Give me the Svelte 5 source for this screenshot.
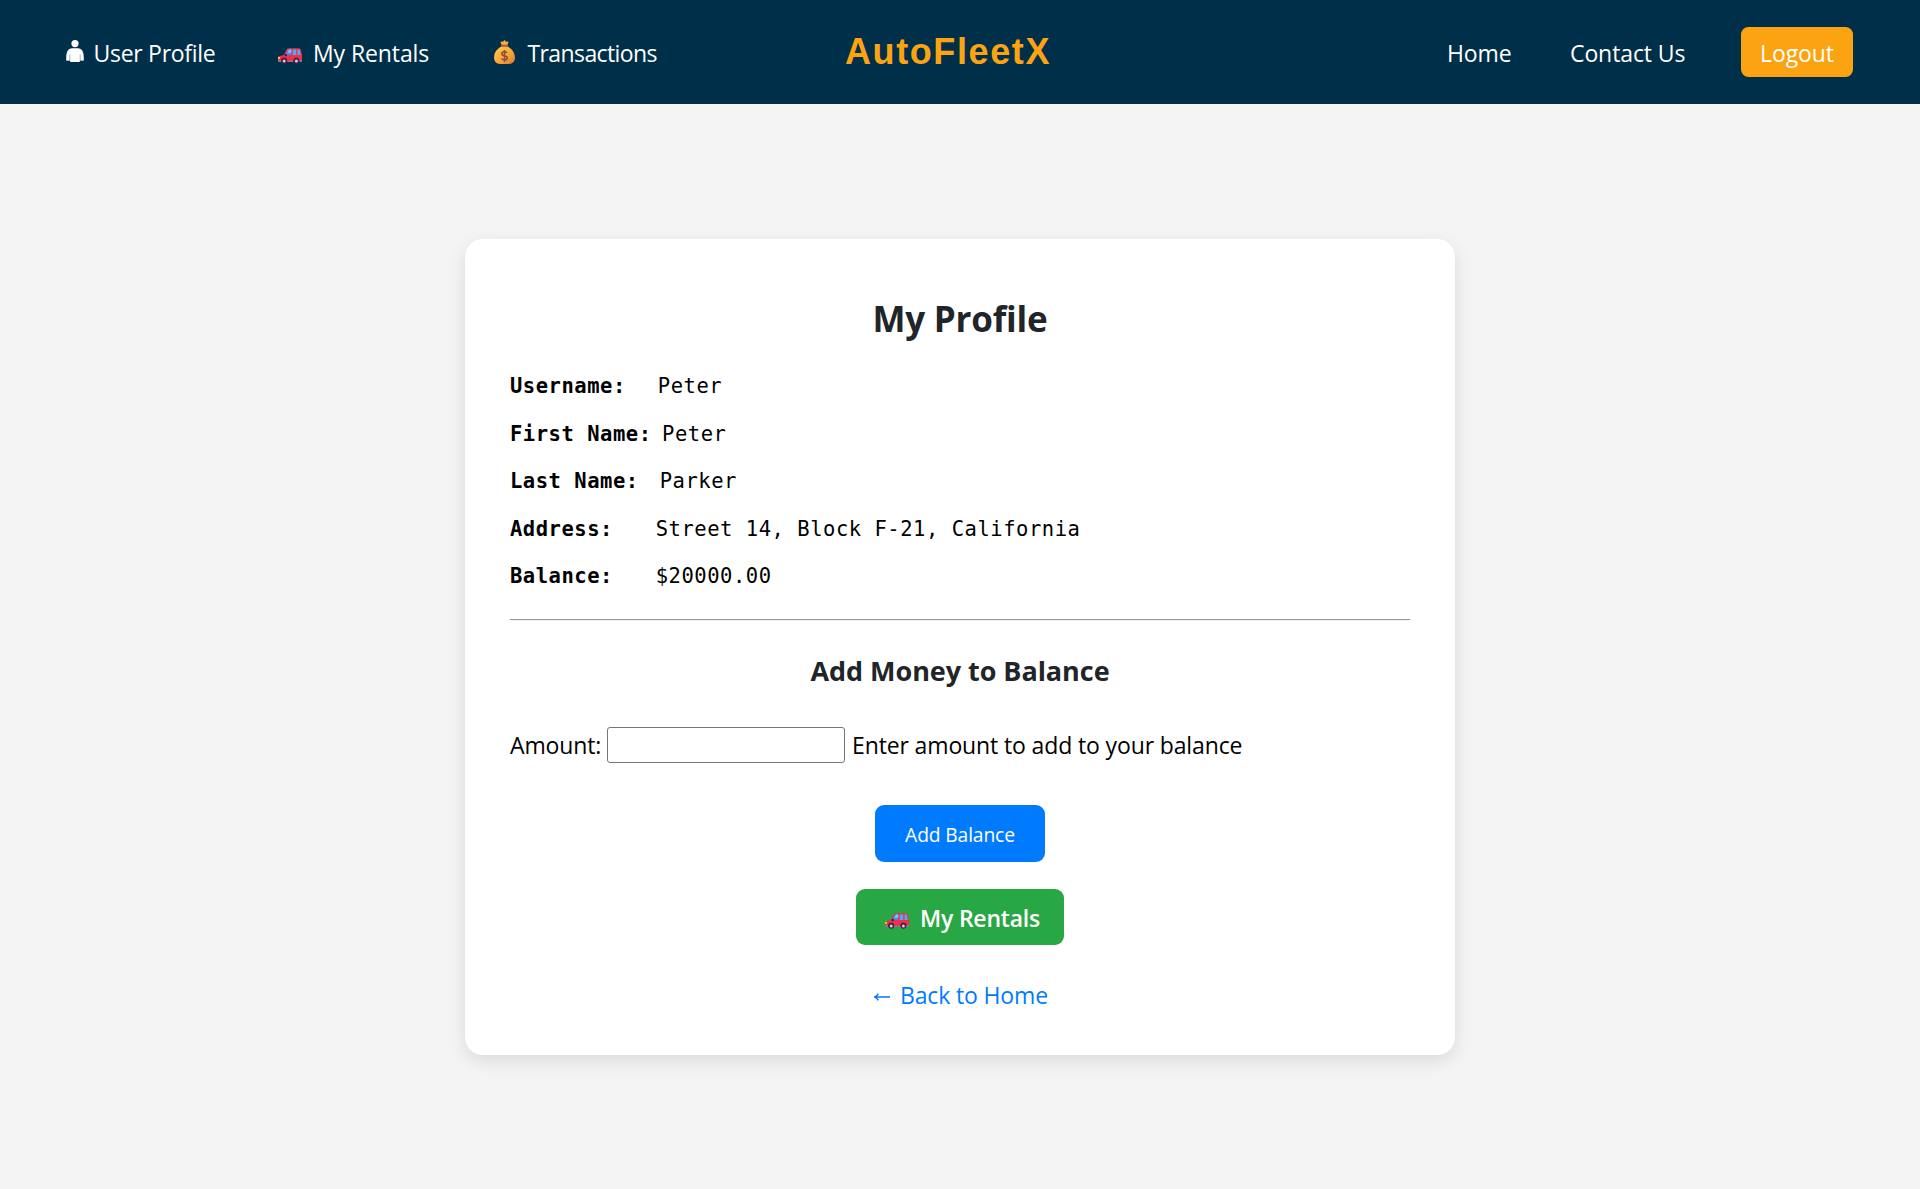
<script>
  const fields = [
    { label: 'Username:', value: 'Peter', gap: 'g3' },
    { label: 'First Name:', value: 'Peter', gap: 'g1' },
    { label: 'Last Name:', value: 'Parker', gap: 'g2' },
    { label: 'Address:', value: 'Street 14, Block F-21, California', gap: 'g4' },
    { label: 'Balance:', value: '$20000.00', gap: 'g4' }
  ];
  let amount = $state('');
</script>

{#snippet car()}
  <svg class="car" viewBox="0 0 24 16" aria-hidden="true">
    <path d="M0.6 8.6 L5.7 7 L8.6 1.6 Q9.3 0.3 10.8 0.3 H20.6 Q22.5 0.3 22.9 2 L24 7.2 V12.6 Q24 13.5 23 13.5 H1.2 Q0 13.5 0 12.3 V9.6 Q0 8.9 .6 8.6Z" fill="#f0304a" />
    <path d="M7 7 L9.4 2.4 Q9.8 1.5 10.8 1.5 H13.3 V7Z" fill="#3f8cf0" />
    <path d="M14.8 1.5 H18.2 V7 H14.8Z M19.6 1.5 H20.8 Q21.7 1.5 21.9 2.4 L22.8 7 H19.6Z" fill="#50a8f8" />
    <path d="M10.9 1.5 H13.3 V4.8 L9.5 5Z" fill="#7ac3ff" />
    <rect x="6.6" y="5.7" width="2.2" height="2.5" rx=".8" fill="#43203a" />
    <path d="M3.1 13.5 V12.6 a3.1 3.1 0 0 1 6.2 0 V13.5Z M15.3 13.5 V12.6 a3.1 3.1 0 0 1 6.2 0 V13.5Z" fill="#8b1841" />
    <rect x="0" y="8.8" width="1.9" height="2.2" rx=".8" fill="#ffd23e" />
    <path d="M0 12 H3 V13.9 H.8 Q0 13.9 0 13.1Z M9.4 12.7 H15.2 V13.9 H9.4Z M21.6 12 H24 V13.1 Q24 13.9 23.2 13.9 H21.6Z" fill="#8c7890" />
    <circle cx="6.2" cy="13" r="2.8" fill="#42204e" />
    <circle cx="18.4" cy="13" r="2.8" fill="#42204e" />
    <circle cx="6.2" cy="13" r="1.5" fill="#d5c8df" />
    <circle cx="18.4" cy="13" r="1.5" fill="#d5c8df" />
  </svg>
{/snippet}

<div class="page">
  <nav>
    <a class="item user" href="#profile">
      <svg class="person" viewBox="0 0 18 22" aria-hidden="true">
        <circle cx="9" cy="3.6" r="3.6" fill="#fff" />
        <path d="M0.2 20 Q-.3 8.2 5.7 8.2 H12.3 Q18.3 8.2 17.8 20 Q17.7 20.9 16.8 20.7 L14.2 20.4 L14 21.2 Q13.8 22 13 22 H5 Q4.2 22 4 21.2 L3.8 20.4 L1.2 20.7 Q.3 20.9 .2 20Z" fill="#fff" />
        <path d="M3.8 14.5 V20.4 M14.2 14.5 V20.4" stroke="#6f8794" stroke-width=".6" />
      </svg>
      <span>User Profile</span>
    </a>
    <a class="item rentals" href="#rentals">{@render car()}<span>My Rentals</span></a>
    <a class="item transactions" href="#transactions">
      <svg class="bag" viewBox="0 0 21 24" aria-hidden="true">
        <defs>
          <linearGradient id="gold" x1="0" y1="0" x2="1" y2="1">
            <stop offset="0" stop-color="#ffd04c" />
            <stop offset=".55" stop-color="#f9a83a" />
            <stop offset="1" stop-color="#d87a35" />
          </linearGradient>
        </defs>
        <path d="M7.8 5.2 L6.5 2.2 Q6.5 1.2 8 1.7 L9.2 1.5 L10.5 0 L11.8 1.5 L13 1.7 Q14.5 1.2 14.5 2.2 L13.2 5.2Z" fill="#f8ab3b" />
        <path d="M7.7 6.3 Q0 10.2 0 17.6 Q0 24 6.2 24 H14.8 Q21 24 21 17.6 Q21 10.2 13.3 6.3Z" fill="url(#gold)" />
        <rect x="6.9" y="4.8" width="7.2" height="1.9" rx=".9" fill="#ad5a40" />
        <path d="M13.1 12.9 Q12.6 11.7 10.5 11.7 Q7.8 11.7 7.8 13.7 Q7.8 15.2 10.5 15.8 Q13.3 16.3 13.3 18.1 Q13.3 20 10.5 20 Q8.1 20 7.6 18.4 M10.5 9.9 V21.9" fill="none" stroke="#8b4b3d" stroke-width="1.5" />
      </svg>
      <span>Transactions</span>
    </a>
    <div class="brand">AutoFleetX</div>
    <a class="item home" href="#home"><span>Home</span></a>
    <a class="item contact" href="#contact"><span>Contact Us</span></a>
    <a class="item logout" href="#logout"><span>Logout</span></a>
  </nav>

  <main>
    <h2>My Profile</h2>
    <dl>
      {#each fields as f}
        <div class="row"><dt>{f.label}</dt><dd class={f.gap}>{f.value}</dd></div>
      {/each}
    </dl>
    <div class="rule"></div>
    <h3>Add Money to Balance</h3>
    <div class="amount">
      <label for="amount">Amount:</label>
      <input id="amount" type="text" bind:value={amount} />
      <span class="hint">Enter amount to add to your balance</span>
    </div>
    <button class="add">Add Balance</button>
    <a class="rent" href="#rentals">{@render car()}<span>My Rentals</span></a>
    <a class="back" href="#home">
      <svg class="arrow" viewBox="0 0 16 10" aria-hidden="true">
        <path d="M16 5 H1.2 M4.2 1.6 Q3 4.2 .6 5 Q3 5.8 4.2 8.4" fill="none" stroke="#007bff" stroke-width="1.5" />
      </svg>
      <span>Back to Home</span>
    </a>
  </main>
</div>

<style>
  :global(body) {
    margin: 0;
    background: #f4f4f4;
    font-family: 'Open Sans', sans-serif;
    font-size: 23px;
    color: #000;
  }
  :global(*) { box-sizing: border-box; }
  a { text-decoration: none; white-space: nowrap; }
  svg { display: block; flex: none; }

  .page {
    display: flex;
    flex-direction: column;
    min-height: 100vh;
    background: #f4f4f4;
  }

  nav {
    display: flex;
    align-items: center;
    height: 104px;
    padding: 0 67px 0 66px;
    background: #003049;
  }
  .item {
    display: flex;
    align-items: center;
    height: 50px;
    padding-top: 2px;
    color: #fff;
    line-height: 48px;
    letter-spacing: -0.1px;
  }
  .person { width: 18px; height: 22px; margin: 0 9.5px 4px 0; }
  .car { width: 24px; height: 16px; }
  .bag { width: 21px; height: 24px; margin: 0 12.5px 2px 0; }
  .item .car { margin: 6px 11px 0 0; }
  .user { width: 212px; letter-spacing: -0.28px; }
  .rentals { width: 216px; }
  .transactions { width: 351px; letter-spacing: -0.6px; }
  .brand {
    width: 602px;
    padding-bottom: 1px;
    font: bold 36px/50px 'Liberation Sans', sans-serif;
    letter-spacing: 1.6px;
    color: #fca311;
  }
  .home { width: 123px; }
  .contact { flex: 1; }
  .logout {
    width: 112px;
    justify-content: center;
    background: #fca311;
    border-radius: 7.5px;
  }

  main {
    display: flex;
    flex-direction: column;
    width: 990px;
    height: 816px;
    margin: 135px auto 0;
    padding: 55px 45px 0;
    background: #fff;
    border-radius: 18px;
    box-shadow: 0 6px 18px rgba(0, 0, 0, 0.1);
  }
  h2, h3 { margin: 0; text-align: center; color: #212529; white-space: nowrap; }
  h2 { font-size: 35px; line-height: 50px; letter-spacing: -0.2px; }
  dl { margin: 19px 0 0; font-family: 'DejaVu Sans Mono', monospace; font-size: 20.5px; letter-spacing: 0.53px; }
  .row { display: flex; height: 47.5px; line-height: 47.5px; white-space: nowrap; }
  dt { font-weight: bold; }
  dd { margin: 0; }
  .g1 { margin-left: 10.5px; }
  .g2 { margin-left: 21px; }
  .g3 { margin-left: 32px; }
  .g4 { margin-left: 42.7px; }
  .rule { flex: none; height: 2px; margin-top: 18px; background: linear-gradient(#9a9a9a 50%, #eee 50%); }
  h3 { margin-top: 30px; font-size: 27px; line-height: 40px; letter-spacing: -0.05px; }
  .amount { display: flex; align-items: center; height: 36px; margin-top: 36px; letter-spacing: -0.13px; white-space: nowrap; }
  .amount label { width: 97px; }
  .amount input {
    width: 238px;
    height: 36px;
    margin: 0 7px 0 0;
    border: 1px solid #767676;
    border-radius: 3px;
    background: #fff;
    font: inherit;
  }
  .add, .rent { align-self: center; flex: none; border: 0; border-radius: 9px; color: #fff; }
  .add {
    width: 170px;
    height: 57px;
    margin-top: 42px;
    padding: 3px 0 0;
    background: #007bff;
    font: 19.3px 'Open Sans', sans-serif;
    letter-spacing: -0.15px;
  }
  .rent {
    display: flex;
    align-items: center;
    width: 208px;
    height: 56px;
    margin-top: 27px;
    padding: 2px 0 0 29px;
    background: #28a745;
    font-weight: 600;
    letter-spacing: -0.2px;
  }
  .rent .car { margin: 6px 11px 0 0; }
  .back { display: flex; align-items: center; align-self: center; height: 40px; margin-top: 30px; padding-left: 2px; color: #007bff; letter-spacing: -0.15px; }
  .arrow { width: 16px; height: 10px; margin: 4px 10px 0 0; }
</style>
